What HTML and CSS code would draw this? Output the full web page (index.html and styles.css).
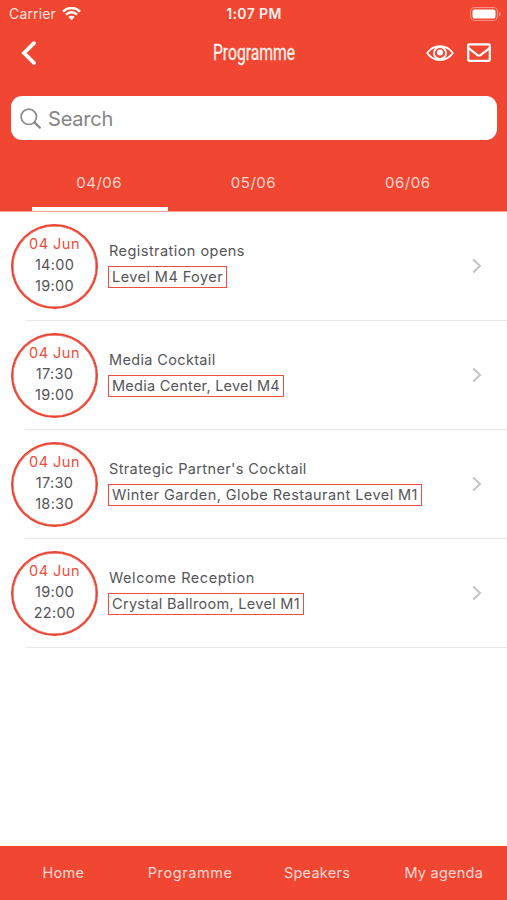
FILE: index.html
```html
<!DOCTYPE html>
<html lang="en">
<head>
<meta charset="utf-8">
<title>Programme</title>
<link rel="stylesheet" href="styles.css">
</head>
<body>
<div class="app">
  <header class="header">
    <div class="status">
      <div class="carrier"><span>Carrier</span>
        <svg width="19" height="14" viewBox="0 0 19 14" fill="none" stroke="#fff" stroke-width="2.5"><path d="M1 4.600C6-.2 13-.2 18 4.600M4 7.700c3.400-3.200 7.600-3.200 11 0"/><path d="M6.300 10.100c2-1.800 4.400-1.800 6.400 0L9.500 13.300z" fill="#fff" stroke="none"/></svg>
      </div>
      <span class="clock">1:07 PM</span>
      <svg class="battery" width="31" height="14" viewBox="0 0 31 14"><rect x=".6" y=".6" width="26.8" height="12.8" rx="4" fill="none" stroke="#fff" stroke-opacity=".45" stroke-width="1"/><rect x="2.5" y="2.4" width="23" height="9.2" rx="2" fill="#fff"/><path d="M29 4.7c2 .8 2 3.8 0 4.6z" fill="#fff" fill-opacity=".5"/></svg>
    </div>
    <nav class="nav">
      <svg class="back" width="18" height="26" viewBox="0 0 18 26" fill="none" stroke="#fff" stroke-width="3.8" stroke-linecap="round"><path d="M14 3.2L4 13l10 9.8"/></svg>
      <h1 class="title">Programme</h1>
      <div class="actions">
        <svg width="28" height="18" viewBox="0 0 28 18" fill="none" stroke="#fff" stroke-width="1.8"><path d="M1.2 9C7.6-.3 20.4-.3 26.8 9 20.4 18.300 7.600 18.300 1.200 9z" stroke-linejoin="round"/><circle cx="14" cy="9" r="6"/><circle cx="14" cy="8.500" r="3" fill="#fff" stroke="none"/></svg>
        <svg width="24" height="19" viewBox="0 0 24 19" fill="none" stroke="#fff" stroke-width="2.200" stroke-linejoin="round"><rect x="1.200" y="1.400" width="21.600" height="16.400" rx="1.200"/><path d="M1.500 5.200l9 7q1.500 1 3 0l9-7"/></svg>
      </div>
    </nav>
    <div class="search">
      <svg width="22" height="22" viewBox="0 0 22 22" fill="none" stroke="#8a8a8d" stroke-width="1.700"><circle cx="8.800" cy="8.800" r="7.700"/><path d="M14.400 14.400l5.400 5.200" stroke-width="2.300" stroke-linecap="round"/></svg>
      <span>Search</span>
    </div>
    <div class="tabs">
      <span class="tab active">04/06</span>
      <span class="tab">05/06</span>
      <span class="tab">06/06</span>
    </div>
  </header>
  <main class="list">
    <article class="row">
      <div class="time"><b>04 Jun</b><span>14:00</span><span>19:00</span></div>
      <div class="info"><span class="name">Registration opens</span><span class="place p1">Level M4 Foyer</span></div>
      <svg class="chevron" width="10" height="16" viewBox="0 0 10 16"><path d="M1.200 1.500L8 8l-6.800 6.500"/></svg>
    </article>
    <article class="row">
      <div class="time"><b>04 Jun</b><span>17:30</span><span>19:00</span></div>
      <div class="info"><span class="name n2">Media Cocktail</span><span class="place p2">Media Center, Level M4</span></div>
      <svg class="chevron" width="10" height="16" viewBox="0 0 10 16"><path d="M1.200 1.500L8 8l-6.800 6.500"/></svg>
    </article>
    <article class="row">
      <div class="time"><b>04 Jun</b><span>17:30</span><span>18:30</span></div>
      <div class="info"><span class="name n3">Strategic Partner's Cocktail</span><span class="place p3">Winter Garden, Globe Restaurant Level M1</span></div>
      <svg class="chevron" width="10" height="16" viewBox="0 0 10 16"><path d="M1.200 1.500L8 8l-6.800 6.500"/></svg>
    </article>
    <article class="row">
      <div class="time"><b>04 Jun</b><span>19:00</span><span>22:00</span></div>
      <div class="info"><span class="name n4">Welcome Reception</span><span class="place p4">Crystal Ballroom, Level M1</span></div>
      <svg class="chevron" width="10" height="16" viewBox="0 0 10 16"><path d="M1.200 1.500L8 8l-6.800 6.500"/></svg>
    </article>
  </main>
  <footer class="footer"><span>Home</span><span class="wide">Programme</span><span>Speakers</span><span>My agenda</span></footer>
</div>
</body>
</html>
```

FILE: styles.css
```css
* { box-sizing: border-box; }
body { margin: 0; background: #fff; font-family: Inter, "Liberation Sans", sans-serif; }
svg { display: block; flex: none; }
.app { width: 507px; height: 900px; display: flex; flex-direction: column; }
.header { height: 212px; flex: none; background: #f14631; color: #fff; border-bottom: 1px solid #f9a397; }
.status { height: 27px; display: grid; grid-template-columns: 1fr auto 1fr; align-items: center; padding: 0 6px 0 9px; font-size: 14px; }
.carrier { display: flex; align-items: center; gap: 6px; color: #ffe3de; letter-spacing: .15px; }
.clock { font-weight: 600; font-size: 14px; letter-spacing: .4px; color: #fff0ed; padding-right: 2px; }
.battery { justify-self: end; }
.nav { height: 52px; display: grid; grid-template-columns: 1fr 82px 1fr; align-items: center; padding: 0 16px 0 20px; }
.title { margin: 0 0 0 -2px; width: 82px; display: flex; justify-content: center; font: 400 21.500px/26px Roboto, sans-serif; transform: scaleX(.73); color: #fff0ed; -webkit-text-stroke: .3px #fff0ed; }
.actions { display: flex; align-items: center; justify-content: flex-end; gap: 13px; padding-bottom: 1px; }
.search { height: 44px; margin: 17px 10px 0 11px; border-radius: 11px; background: #fff; display: flex; align-items: center; gap: 6px; padding: 1px 0 0 9px; font-size: 20px; letter-spacing: -.2px; color: #858588; }
.tabs { height: 71px; display: flex; padding: 20px 22px 0; }
.tab { flex: 1; display: flex; align-items: center; justify-content: center; padding: 0 2px 3px 0; margin: 0 8px 0 10px; font-size: 15px; letter-spacing: .5px; color: #ffd5ce; border-bottom: 4px solid transparent; }
.active { border-color: #fff; }
.list { flex: 1; }
.row { height: 109.100px; display: flex; align-items: center; padding: 0 25px 1px 11px; background: linear-gradient(#e9e9e9, #e9e9e9) 25px 100% / 100% 1px no-repeat; color: #555558; }
.time { width: 87px; height: 85px; border: 2px solid #ea4636; box-shadow: inset 0 0 0 .5px #ea4636; border-radius: 50%; display: flex; flex-direction: column; align-items: center; justify-content: center; font-size: 14.500px; line-height: 21px; letter-spacing: .3px; padding-bottom: 3px; }
.time b { font-weight: 400; color: #ee4b3c; letter-spacing: .5px; }
.info { flex: 1; margin-left: 10px; display: flex; flex-direction: column; align-items: flex-start; gap: 5px; font-size: 14.500px; line-height: 20px; letter-spacing: .3px; }
.name { margin: -3px 0 0 1px; letter-spacing: .45px; }
.n2 { letter-spacing: .35px; }
.n3 { letter-spacing: .37px; }
.n4 { letter-spacing: .55px; }
.place { height: 22px; line-height: 20px; border: 1px solid #ec4f40; padding: 0 3px; white-space: nowrap; }
.p1 { letter-spacing: .43px; }
.p2 { letter-spacing: .25px; }
.p3 { letter-spacing: .43px; }
.chevron { fill: none; stroke: #c4c4c6; stroke-width: 2; }
.footer { height: 54px; flex: none; background: #f14631; color: #ffd9d3; display: grid; grid-template-columns: repeat(4, 126.800px); align-items: center; justify-items: center; padding-bottom: 2px; font-size: 14.500px; letter-spacing: .25px; }
.wide { letter-spacing: .6px; }
```
